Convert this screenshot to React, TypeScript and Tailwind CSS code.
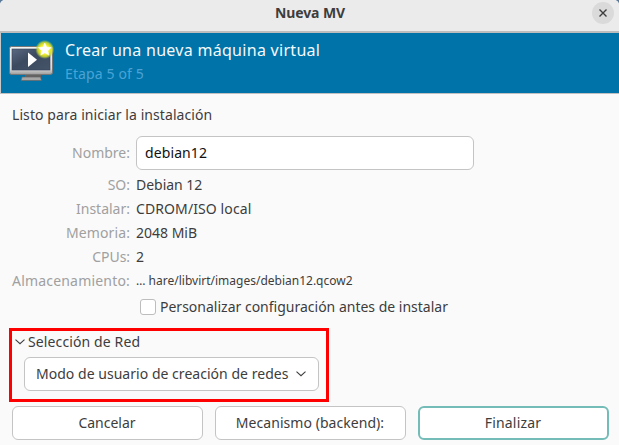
import React from 'react';

const details = [
  { label: 'SO:', value: 'Debian 12', fit: 'tracking-[-0.03px]', labelFit: 'tracking-[0px]' },
  { label: 'Instalar:', value: 'CDROM/ISO local', fit: 'tracking-[0.1px]', labelFit: 'tracking-[0px]' },
  { label: 'Memoria:', value: '2048 MiB', fit: 'tracking-[0px]', labelFit: 'tracking-[0.1px]' },
  { label: 'CPUs:', value: '2', fit: 'tracking-[0px]', labelFit: 'tracking-[-0.05px]' },
];

function MonitorIcon() {
  return (
    <svg width="48" height="46" viewBox="0 0 48 46" className="block shrink-0">
      <defs>
        <linearGradient id="frame" x1="0" y1="0" x2="0" y2="1">
          <stop offset="0" stopColor="#f4f4f4" />
          <stop offset="0.8" stopColor="#d8d8d8" />
          <stop offset="1" stopColor="#9b9b9b" />
        </linearGradient>
        <linearGradient id="screen" x1="0" y1="0" x2="1" y2="1">
          <stop offset="0" stopColor="#5a6980" />
          <stop offset="0.45" stopColor="#3c4a60" />
          <stop offset="1" stopColor="#465468" />
        </linearGradient>
        <radialGradient id="glow">
          <stop offset="0.5" stopColor="#f0f02c" />
          <stop offset="0.75" stopColor="#d4dc28" stopOpacity="0.85" />
          <stop offset="1" stopColor="#9ccc48" stopOpacity="0" />
        </radialGradient>
      </defs>
      <path d="M17 34h16v5H17z" fill="#636363" />
      <path d="M14 37h18.5l1 3.5H13z" fill="#a6a6a6" stroke="#666" strokeWidth="0.7" />
      <rect x="1.5" y="6.5" width="43" height="28" rx="2" fill="url(#frame)" stroke="#777" />
      <rect x="4" y="9" width="38" height="21" fill="url(#screen)" stroke="#35425a" strokeWidth="0.6" />
      <path d="M20 12.5v14.5l9-7.2z" fill="#fff" />
      <circle cx="36.8" cy="9.5" r="9.6" fill="url(#glow)" />
      <path d="m36.8 3 1.9 4 4.5.6-3.3 3.1.9 4.4-4-2.2-4 2.2.9-4.4-3.3-3.1 4.5-.6z" fill="#fff" stroke="#fff" strokeWidth="0.5" />
    </svg>
  );
}

function Chevron() {
  return (
    <svg width="10" height="6" viewBox="0 0 10 6" className="block shrink-0">
      <path d="M.5.7 5 4.7 9.5.7" fill="none" stroke="#3d3d3d" strokeWidth="1.1" />
    </svg>
  );
}

const button = 'flex h-[34px] w-[191px] items-center justify-center rounded-md bg-white pr-[1px]';

export default function App() {
  return (
    <div className="bg-[#5a7a9a]">
      <div className="h-[445px] w-[619px] overflow-hidden rounded-t-[5px] bg-[#fafafa] font-['Noto_Sans',sans-serif] text-[14px] leading-[24px] text-[#3d3d3d]">
        <header className="grid h-[33px] grid-cols-[1fr_auto_1fr] items-center border-b-2 border-[#bdbdbd] bg-[#ebebeb] pr-[5px] pb-[5px]">
          <h1 className="col-start-2 pl-[6px] font-bold tracking-[-0.08px]">Nueva MV</h1>
          <button aria-label="Cerrar" className="flex size-[22px] items-center justify-center justify-self-end rounded-full bg-[#dadada]">
            <svg width="8" height="8" viewBox="0 0 8 8"><path d="m.5.5 7 7m0-7-7 7" stroke="#3d3d3d" strokeWidth="1.4" /></svg>
          </button>
        </header>
        <section className="flex h-[61px] border-b border-l border-b-[#c0c0c0] border-l-[#c8c8c8] bg-[#0073a9] pt-[7px] pl-[7px]">
          <MonitorIcon />
          <div className="pl-[9px]">
            <h2 className="h-[24px] text-[16px] leading-[20px] tracking-[0.29px] text-[#f5f9fc]">Crear una nueva máquina virtual</h2>
            <p className="leading-[20px] tracking-[0.12px] text-[#4aa3d6]">Etapa 5 of 5</p>
          </div>
        </section>
        <main className="pt-[9px] pl-3">
          <p className="tracking-[0.08px]">Listo para iniciar la instalación</p>
          <div className="grid grid-cols-[118px_338px] items-center gap-x-[6px] pt-[9px]">
            <label className="mb-[4px] text-right text-[#a0a0a0]">Nombre:</label>
            <div className="mb-[3px] flex h-[34px] items-center rounded-md border border-[#c4c4c4] bg-white pl-2 tracking-[0.1px] text-[#111]">debian12</div>
            {details.map((d) => (
              <React.Fragment key={d.label}>
                <span className={`text-right text-[#a0a0a0] ${d.labelFit}`}>{d.label}</span>
                <span className={d.fit}>{d.value}</span>
              </React.Fragment>
            ))}
            <span className="text-right tracking-[0.19px] whitespace-nowrap text-[#a0a0a0]">Almacenamiento:</span>
            <span className="text-[12px]">… hare/libvirt/images/debian12.qcow2</span>
          </div>
          <div className="flex h-[28px] items-center gap-1 pl-[128px]">
            <span className="size-4 rounded-[3px] border border-[#bdbdbd] bg-white" />
            <span>Personalizar configuración antes de instalar</span>
          </div>
          <section className="mt-[7px] -ml-[3px] h-[74px] w-[320px] border-[3px] border-[#ff0000] pl-[3px]">
            <div className="flex h-[22px] items-center gap-[3px]">
              <Chevron />
              <span className="tracking-[0.12px]">Selección de Red</span>
            </div>
            <button className="mt-1 ml-[9px] flex h-[34px] w-[295px] items-center rounded-md border border-[#c4c4c4] bg-white pl-[11px]">
              <span className="w-[260px] text-left tracking-[0.03px] whitespace-nowrap">Modo de usuario de creación de redes</span>
              <Chevron />
            </button>
          </section>
          <footer className="mt-1 flex gap-3">
            <button className={`${button} border border-[#c4c4c4]`}>Cancelar</button>
            <button className={`${button} border border-[#c4c4c4] tracking-[0.05px]`}>Mecanismo (backend):</button>
            <button className={`${button} border-2 border-[#73bcb7] tracking-[0.2px]`}>Finalizar</button>
          </footer>
        </main>
      </div>
    </div>
  );
}
